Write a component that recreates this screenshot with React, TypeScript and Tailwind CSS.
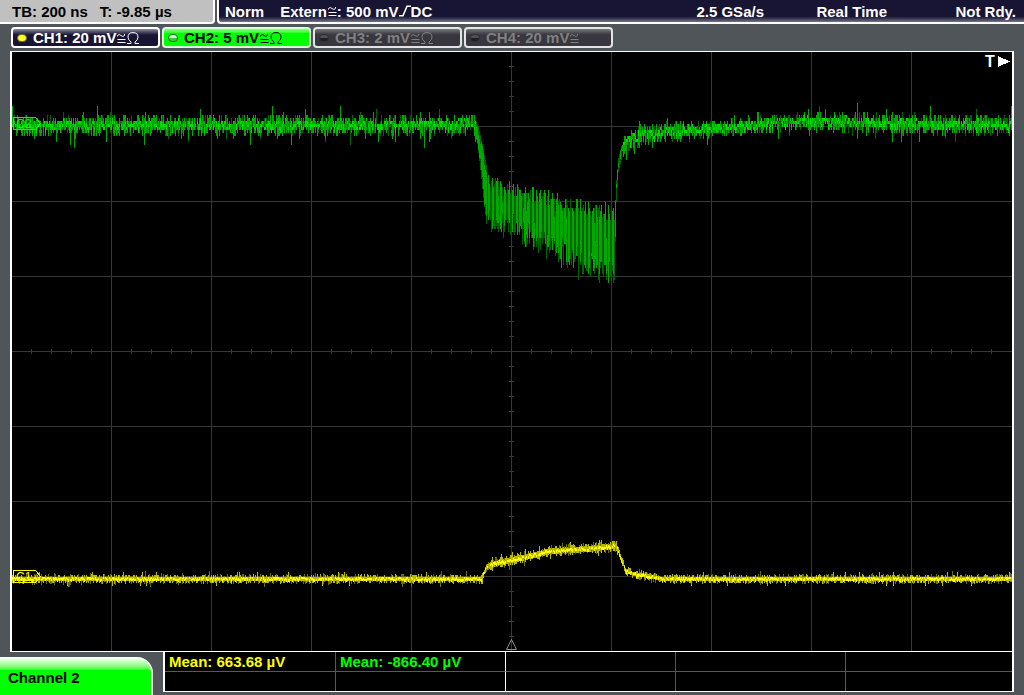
import { useState } from "react";

type Point = [number, number];

type Channel = {
  id: number;
  scale: string;
  ohm: boolean;
  style: string;
  lamp: string;
};

const channels: Channel[] = [
  {
    id: 1,
    scale: "20 mV",
    ohm: true,
    style: "border-white bg-linear-to-b from-[#8b8ba0] via-[#171533] via-35% to-[#171533] text-white",
    lamp: "border-[#6a6a20] bg-[#ffff30]",
  },
  {
    id: 2,
    scale: "5 mV",
    ohm: true,
    style: "border-[#d8ffd8] bg-linear-to-b from-[#7dff7d] via-[#00ff00] via-25% to-[#00ff00] text-black",
    lamp: "border-[#2c6b2c] bg-linear-to-b from-[#d0f5d0] from-50% to-[#37c837] to-50%",
  },
  {
    id: 3,
    scale: "2 mV",
    ohm: true,
    style: "border-[#e4e4e4] bg-linear-to-b from-[#77777b] via-[#38363e] via-35% to-[#38363e] text-[#808080]",
    lamp: "border-[#303030] bg-linear-to-b from-[#505054] from-50% to-[#202024] to-50%",
  },
  {
    id: 4,
    scale: "20 mV",
    ohm: false,
    style: "border-[#e4e4e4] bg-linear-to-b from-[#77777b] via-[#38363e] via-35% to-[#38363e] text-[#808080]",
    lamp: "border-[#303030] bg-linear-to-b from-[#505054] from-50% to-[#202024] to-50%",
  },
];

const PLOT_W = 1000;
const PLOT_H = 599;

// upper and lower edges of the traces, in plot coordinates
const greenTop: Point[] = [
  [0, 66], [462, 66], [466, 74], [470, 92], [473, 108], [476, 124], [480, 126], [498, 133], [518, 138],
  [538, 143], [558, 149], [578, 153], [602, 156], [603, 148], [604, 128], [606, 106], [610, 90],
  [616, 82], [624, 78], [640, 75], [690, 71], [750, 67], [800, 62], [900, 65], [1000, 66],
];
const greenBottom: Point[] = [
  [0, 80], [462, 80], [465, 92], [468, 118], [471, 146], [474, 172], [478, 174], [498, 182], [518, 190],
  [538, 201], [558, 212], [578, 219], [602, 226], [603, 190], [604, 150], [606, 120], [610, 104],
  [616, 96], [624, 92], [640, 88], [690, 83], [750, 78], [800, 75], [900, 79], [1000, 80],
];
const yellowMid: Point[] = [
  [0, 527], [469, 527], [474, 515], [484, 511], [500, 508], [518, 504], [538, 499], [560, 498],
  [585, 496], [604, 494], [608, 504], [613, 518], [620, 522], [635, 524], [650, 527], [1000, 527],
];

function valueAt(points: Point[], x: number) {
  for (let i = 1; i < points.length; i++) {
    const [x1, y1] = points[i];
    if (x <= x1) {
      const [x0, y0] = points[i - 1];
      return y0 + ((y1 - y0) * (x - x0)) / (x1 - x0);
    }
  }
  return points[points.length - 1][1];
}

function makeRandom(seed: number) {
  let s = seed;
  return () => {
    s = (s + 0x6d2b79f5) | 0;
    let t = Math.imul(s ^ (s >>> 15), 1 | s);
    t = (t + Math.imul(t ^ (t >>> 7), 61 | t)) ^ t;
    return ((t ^ (t >>> 14)) >>> 0) / 4294967296;
  };
}

const bar = (x: number, top: number, bottom: number) =>
  `M${x} ${Math.round(top)}h1V${Math.round(bottom)}h-1z`;

const snap = (v: number) => Math.round(v / 3) * 3;

function greenTrace() {
  const rnd = makeRandom(7);
  let dim = "";
  let mid = "";
  let bright = "";
  for (let x = 0; x < PLOT_W; x++) {
    let top = valueAt(greenTop, x);
    let bottom = valueAt(greenBottom, x);
    const burst = x > 474 && x < 603;
    const edge = (x > 463 && x <= 474) || (x >= 603 && x < 610);

    if (burst) {
      // ringing: alternating dim and lit columns
      top += (rnd() - 0.3) * 15;
      bottom += (rnd() - 0.6) * 20;
      if (rnd() > 0.9) bottom += 9;
      if (x % 4 < 2) {
        mid += bar(x, snap(top), snap(bottom - rnd() * 12));
        if (rnd() > 0.6) dim += bar(x, snap(top + 9), snap(bottom));
      } else {
        dim += bar(x, snap(top + 3), snap(bottom));
        if (rnd() > 0.65) mid += bar(x, snap(top + rnd() * 40), snap(bottom - rnd() * 12));
      }
      continue;
    }

    if (edge) {
      dim += bar(x, top, bottom);
      mid += bar(x, top + rnd() * 10, bottom - rnd() * 14);
      continue;
    }

    top += (rnd() - 0.35) * 11;
    bottom += (rnd() - 0.6) * 11;
    if (rnd() > 0.93) top -= 3 + rnd() * 8;
    if (rnd() > 0.9) bottom += 3 + rnd() * 9;
    if (rnd() > 0.3) {
      mid += bar(x, snap(top), snap(bottom));
    } else {
      dim += bar(x, snap(top), snap(bottom));
      if (rnd() > 0.4) mid += bar(x, snap(top + 6), snap(bottom - 3));
    }
    const center = (valueAt(greenTop, x) + valueAt(greenBottom, x)) / 2;
    const start = snap(center - 2 + (rnd() - 0.5) * 8);
    if (rnd() > 0.2) bright += bar(x, start, start + (rnd() > 0.7 ? 6 : 3));
  }
  return { dim, mid, bright };
}

function yellowTrace() {
  const rnd = makeRandom(23);
  let dim = "";
  let mid = "";
  let bright = "";
  for (let x = 0; x < PLOT_W; x++) {
    const raised = x > 474 && x < 606;
    const center = valueAt(yellowMid, x);
    const spread = raised ? 4 : 3;
    let top = center - spread + (rnd() > 0.4 ? 1 : -1);
    let bottom = center + spread - (rnd() > 0.4 ? 1 : -1);
    if (rnd() > 0.92) top -= 3;
    if (rnd() > 0.92) bottom += 3;
    if (rnd() > 0.25) {
      mid += bar(x, top, bottom);
    } else {
      dim += bar(x, top - 1, bottom + 1);
      mid += bar(x, center - 2, center + 2);
    }
    const start = center - 2 + Math.floor(rnd() * 3);
    if (rnd() > 0.12) bright += bar(x, start, start + (rnd() > 0.6 ? 3 : 2));
  }
  return { dim, mid, bright };
}

const green = greenTrace();
const yellow = yellowTrace();

function gridPaths() {
  let lines = "";
  let ticks = "";
  for (let i = 1; i < 10; i++) lines += `M${i * 100 - 1} 0h1v${PLOT_H}h-1z`;
  for (let i = 1; i < 8; i++) lines += `M0 ${i * 75 - 1}h${PLOT_W}v1h-${PLOT_W}z`;
  for (let i = 1; i < 50; i++) ticks += `M${i * 20 - 1} 297h1v5h-1z`;
  for (let i = 1; i < 40; i++) ticks += `M497 ${i * 15 - 1}h5v1h-5z`;
  return { lines, ticks };
}

const grid = gridPaths();

// "≅" as drawn on the channel keys
function Coupling() {
  return (
    <svg viewBox="0 0 10 10" className="h-2.5 w-2.5 shrink-0" fill="none" stroke="currentColor" aria-hidden="true">
      <path d="M1.5 3.5V2.5Q3 .5 5 2.5T8.5 2.500V1M1.5 6.500h8M1.5 9.500h8" />
    </svg>
  );
}

function Ohm() {
  return (
    <svg viewBox="0 0 14 12" className="h-3 w-3.5 shrink-0" fill="none" stroke="currentColor" aria-hidden="true">
      <path d="M1 11.5h4V10Q2 8 2 5.2 2 .6 7 .6t5 4.6Q12 8 9 10v1.5h4" />
    </svg>
  );
}

function RisingEdge() {
  return (
    <svg viewBox="0 0 12 12" className="h-3 w-3 shrink-0" fill="none" stroke="currentColor" strokeWidth="1.6" aria-hidden="true">
      <path d="M0 10.7h4L8 1.3h4" />
    </svg>
  );
}

function TopBar() {
  return (
    <header className="flex h-6 gap-0.5 whitespace-nowrap">
      <div className="flex w-[215px] shrink-0 gap-3 rounded-br-sm border-r-2 border-b-2 border-white bg-[#c0c0c0] pl-3 text-black">
        <span>TB: 200 ns</span>
        <span>T: -9.85 µs</span>
      </div>
      <div className="flex grow justify-between rounded-bl-sm border-b-2 border-l-2 border-white bg-linear-to-b from-[#171533] from-75% to-[#77758a] pr-2 pl-1.5 text-white">
        <div className="flex gap-4">
          <span>Norm</span>
          <span className="flex">
            Extern
            <span className="flex items-center"><Coupling /></span>
            : 500 mV
            <span className="flex items-center"><RisingEdge /></span>
            DC
          </span>
        </div>
        <div className="flex">
          <span className="w-30">2.5 GSa/s</span>
          <span className="w-[139px]">Real Time</span>
          <span>Not Rdy.</span>
        </div>
      </div>
    </header>
  );
}

function ChannelKey({ channel, active, onSelect }: { channel: Channel; active: boolean; onSelect: () => void }) {
  return (
    <button
      type="button"
      aria-pressed={active}
      onClick={onSelect}
      className={`flex h-[21px] w-[149px] items-center rounded border-2 pl-1 leading-4 whitespace-nowrap ${channel.style}`}
    >
      <span className={`mr-1.5 h-2 w-2.5 rounded-full border ${channel.lamp}`} />
      CH{channel.id}: {channel.scale}
      <Coupling />
      {channel.ohm && <Ohm />}
    </button>
  );
}

function Plot() {
  return (
    <div className="border-x-2 border-y border-white bg-black">
      <svg
        viewBox={`0 0 ${PLOT_W} ${PLOT_H}`}
        className="block h-auto w-full font-bold"
        shapeRendering="crispEdges"
        role="img"
        aria-label="Channel 1 and channel 2 traces"
      >
        <path d={grid.lines} fill="#373737" />
        <path d={grid.ticks} fill="#373737" />

        <path d={green.dim} fill="#006400" />
        <path d={green.mid} fill="#00a800" />
        <path d={green.bright} fill="#00dc00" />

        <path d={yellow.dim} fill="#6e6e00" />
        <path d={yellow.mid} fill="#b8b800" />
        <path d={yellow.bright} fill="#ffff00" />

        {/* channel position tags */}
        <path d="M1.5 65.5h22l5 6-5 6h-22z" fill="none" stroke="#00ff00" />
        <text x="4" y="76" fontSize="12" fontWeight="400" fill="#00ff00">C2</text>
        <path d="M1.5 518.5h22l5 6-5 6h-22z" fill="none" stroke="#ffff00" />
        <text x="4" y="529" fontSize="12" fontWeight="400" fill="#ffff00">C1</text>

        {/* trigger markers */}
        <text x="973" y="15" fontSize="16" fill="#fff">T</text>
        <path d="M986 4v11l12-5.5z" fill="#fff" />
        <path d="M499.5 587.5 494.5 597.5h10z" fill="none" stroke="#909090" shapeRendering="auto" />
      </svg>
    </div>
  );
}

function Measurements() {
  const rule = "border-[#58585c] ";
  return (
    <table className="mb-1 h-10 grow table-fixed border-separate border-spacing-0 border-x-2 border-b border-white bg-black text-left">
      <tbody>
        <tr className="h-5">
          <td className={rule + "w-[171px] border-r border-b p-0 pl-1 leading-4 whitespace-nowrap text-[#ffff00]"}>
            Mean: 663.68 µV
          </td>
          <td className="w-[170px] border-r border-b border-r-white border-b-[#58585c] p-0 pl-1 leading-4 whitespace-nowrap text-[#00ff00]">
            Mean: -866.40 µV
          </td>
          <td className={rule + "w-[170px] border-r border-b p-0"} />
          <td className={rule + "w-[170px] border-r border-b p-0"} />
          <td className={rule + "border-b p-0"} />
        </tr>
        <tr>
          <td className={rule + "border-r p-0"} />
          <td className="border-r border-white p-0" />
          <td className={rule + "border-r p-0"} />
          <td className={rule + "border-r p-0"} />
          <td className="p-0" />
        </tr>
      </tbody>
    </table>
  );
}

export default function App() {
  const [selected, setSelected] = useState(2);

  return (
    <main className="flex min-h-screen flex-col bg-[#50555a] font-['Liberation_Sans',sans-serif] text-[15px] leading-6 font-bold">
      <TopBar />
      <nav className="flex gap-0.5 px-[11px] py-[3px]" aria-label="Channels">
        {channels.map((channel) => (
          <ChannelKey
            key={channel.id}
            channel={channel}
            active={selected === channel.id}
            onSelect={() => setSelected(channel.id)}
          />
        ))}
      </nav>
      <div className="px-2.5">
        <Plot />
      </div>
      <footer className="flex items-start pr-2.5">
        <button
          type="button"
          className="mt-[5px] mr-2.5 h-[38px] w-[153px] shrink-0 rounded-tr-2xl border-r-2 border-white bg-linear-to-b from-white to-[#00ff00] to-35% pt-1 pl-2 text-left text-black"
        >
          Channel {selected}
        </button>
        <Measurements />
      </footer>
    </main>
  );
}
